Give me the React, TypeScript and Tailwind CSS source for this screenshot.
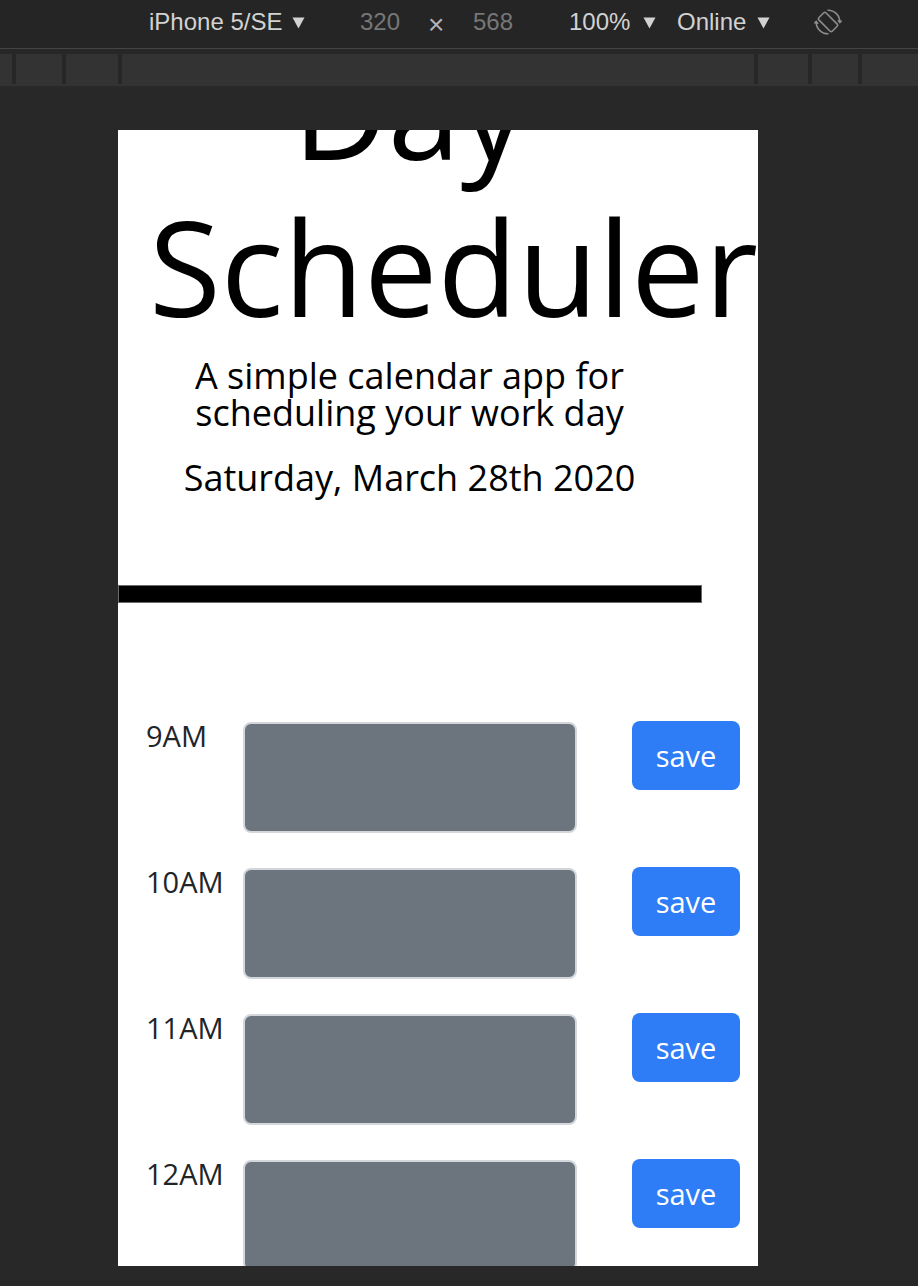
import React from 'react';

const hours = ['9AM', '10AM', '11AM', '12AM'];

function RotateIcon() {
  return (
    <svg width="30" height="30" viewBox="0 0 30 30" fill="none" stroke="#8c8c8c" strokeWidth="1.6">
      <rect x="10" y="5.5" width="10" height="19" rx="1.5" transform="rotate(-45 15 15)" />
      <path d="M14.5 3.2 A11.8 11.8 0 0 1 26.8 15.5" />
      <path d="M15.5 26.8 A11.8 11.8 0 0 1 3.2 14.5" />
      <path d="M24.9 13.3 L26.8 15.6 L28.6 13.4" />
      <path d="M5.1 16.7 L3.2 14.4 L1.4 16.6" />
    </svg>
  );
}

function Caret() {
  return (
    <svg width="13" height="13" viewBox="0 0 13 13" className="fill-[#d2d2d2]">
      <path d="M0.5 1.5 H12.5 L6.5 12.5 Z" />
    </svg>
  );
}

function Toolbar() {
  const ui = { fontFamily: '"Liberation Sans", Arial, sans-serif' };
  return (
    <div className="h-[48px] pb-[4px] bg-[#252525] flex items-center text-[24px] whitespace-nowrap" style={ui}>
      <span className="ml-[149px] w-[133px] text-[#d2d2d2]">iPhone 5/SE</span>
      <span className="ml-[10px] w-[13px] flex"><Caret /></span>
      <span className="ml-[55px] w-[40px] text-[#777777]">320</span>
      <span className="ml-[28px] w-[18px] mt-[6px] text-[28px] text-[#b4b4b4]">×</span>
      <span className="ml-[27px] w-[40px] text-[#777777]">568</span>
      <span className="ml-[56px] w-[69px] text-[#d2d2d2]">100%</span>
      <span className="ml-[5px] w-[13px] flex"><Caret /></span>
      <span className="ml-[21px] w-[71px] text-[#d2d2d2]">Online</span>
      <span className="ml-[9px] w-[13px] flex"><Caret /></span>
      <span className="ml-[43px] flex">
        <RotateIcon />
      </span>
    </div>
  );
}

function Ruler() {
  return (
    <div className="h-[38px] border-t border-[#454545] bg-[#272727] pt-[5px]">
      <div className="h-[32px] bg-[#333333] flex items-start">
        <div className="w-[12px]" />
        <div className="w-[4px] h-[30px] bg-[#272727]" />
        <div className="w-[46px]" />
        <div className="w-[4px] h-[30px] bg-[#272727]" />
        <div className="w-[52px]" />
        <div className="w-[4px] h-[30px] bg-[#272727]" />
        <div className="w-[632px]" />
        <div className="w-[4px] h-[30px] bg-[#272727]" />
        <div className="w-[50px]" />
        <div className="w-[4px] h-[30px] bg-[#272727]" />
        <div className="w-[46px]" />
        <div className="w-[4px] h-[30px] bg-[#272727]" />
      </div>
    </div>
  );
}

function TimeRow({ hour }: { hour: string }) {
  return (
    <div className="flex items-start pl-[28px]">
      <div className="w-[97px] text-[29px] leading-[30px] text-[#212529]">{hour}</div>
      <textarea
        className="w-[334px] h-[111px] mt-[1px] bg-[#6c757d] border-2 border-[#d3d7dc] rounded-[8px] resize-none outline-none"
        readOnly
      />
      <button className="ml-[55px] w-[108px] h-[69px] bg-[#2f7df6] rounded-[8px] text-white text-[29px] leading-none pb-[1px]">
        save
      </button>
    </div>
  );
}

export default function App() {
  const body = { fontFamily: '"Open Sans", "Noto Sans", sans-serif' };
  return (
    <div className="w-[918px] h-[1286px] bg-[#282828] overflow-hidden">
      <Toolbar />
      <Ruler />
      <div className="ml-[118px] mt-[44px] w-[640px] h-[1136px] bg-white overflow-hidden" style={body}>
        <div className="mt-[-99px]">
          <header className="w-[583px] px-[31px] text-center text-black">
            <h1 className="text-[131px] leading-[157px] font-normal">Day Scheduler</h1>
            <p className="mt-[12px] text-[36px] leading-[37px]">
              A simple calendar app for scheduling your work day
            </p>
            <p className="mt-[23px] text-[36px] leading-[48px]">Saturday, March 28th 2020</p>
          </header>
          <hr className="mt-[83px] w-[584px] h-[18px] bg-black border border-[#6b6b6b]" />
          <div className="mt-[118px] flex flex-col gap-[34px]">
            {hours.map((h) => (
              <TimeRow key={h} hour={h} />
            ))}
          </div>
        </div>
      </div>
    </div>
  );
}
